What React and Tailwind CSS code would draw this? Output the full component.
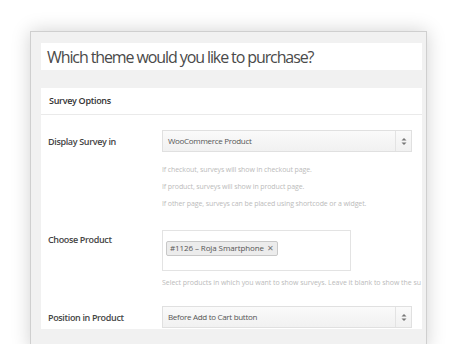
export default function App() {
  const font = { fontFamily: '"Open Sans", "Noto Sans", sans-serif' }

  const Arrows = () => (
    <svg width="6" height="9" viewBox="0 0 6 9" className="text-[#777]">
      <path d="M0.5 3.5 L3 1 L5.5 3.5 Z" fill="currentColor" />
      <path d="M0.5 5.5 L3 8 L5.5 5.5 Z" fill="currentColor" />
    </svg>
  )

  const Select = ({ value }) => (
    <div className="flex h-[22px] w-[250px] items-stretch border border-[#e0e0e0] bg-gradient-to-b from-[#fafafa] to-[#f1f1f1]">
      <div className="flex flex-1 items-center pl-[5px] text-[8px] tracking-[-0.3px] text-[#555]">{value}</div>
      <div className="flex w-[16px] items-center justify-center border-l border-[#e3e3e3]">
        <Arrows />
      </div>
    </div>
  )

  return (
    <div className="h-[344px] w-[458px] overflow-hidden bg-white" style={font}>
      <div className="ml-[30px] mt-[31px] w-[397px] border border-[#cfcfcf] bg-[#f1f1f1] pl-[10px] pr-[4px] pt-[11px] pb-[20px] shadow-[0_0_18px_rgba(0,0,0,0.18)]">
        <div className="flex h-[27px] items-center bg-white pl-[6px] text-[16px] tracking-[-1.1px] text-[#4a4a4a]">
          Which theme would you like to purchase?
        </div>

        <div className="mt-[18px] overflow-hidden bg-white">
          <div className="flex h-[27px] items-center border-b border-[#eaeaea] pl-[8px] text-[9px] font-semibold tracking-[-0.3px] text-[#333]">
            Survey Options
          </div>

          <div className="pt-[15px] pb-[1px]">
            <div className="flex">
              <div className="w-[121px] shrink-0 pl-[7px] pt-[5px] text-[9px] font-semibold tracking-[-0.35px] text-[#444]">
                Display Survey in
              </div>
              <div>
                <Select value="WooCommerce Product" />
                <div className="mt-[9px] text-[7px] leading-[17px] tracking-[-0.1px] text-[#bbb]">
                  <div>If checkout, surveys will show in checkout page.</div>
                  <div>If product, surveys will show in product page.</div>
                  <div>If other page, surveys can be placed using shortcode or a widget.</div>
                </div>
              </div>
            </div>

            <div className="mt-[18px] flex">
              <div className="w-[121px] shrink-0 pl-[7px] pt-[3px] text-[9px] font-semibold tracking-[-0.35px] text-[#444]">
                Choose Product
              </div>
              <div className="min-w-0 flex-1 overflow-hidden">
                <div className="h-[41px] w-[189px] border border-[#e3e3e3] bg-white p-[2px] pl-[3px]">
                  <span className="inline-flex h-[15px] items-center gap-[3px] rounded-[2px] border border-[#c8c8c8] bg-[#ececec] px-[3px] text-[8px] tracking-[-0.1px] text-[#555]">
                    #1126 – Roja Smartphone
                    <span className="text-[8px] text-[#777]">✕</span>
                  </span>
                </div>
                <div className="mt-[3px] whitespace-nowrap text-[7px] leading-[17px] tracking-[-0.05px] text-[#bbb]">
                  Select products in which you want to show surveys. Leave it blank to show the su
                </div>
              </div>
            </div>

            <div className="mt-[15px] flex">
              <div className="w-[121px] shrink-0 pl-[7px] pt-[5px] text-[9px] font-semibold tracking-[-0.35px] text-[#444]">
                Position in Product
              </div>
              <Select value="Before Add to Cart button" />
            </div>
          </div>
        </div>
      </div>
    </div>
  )
}
